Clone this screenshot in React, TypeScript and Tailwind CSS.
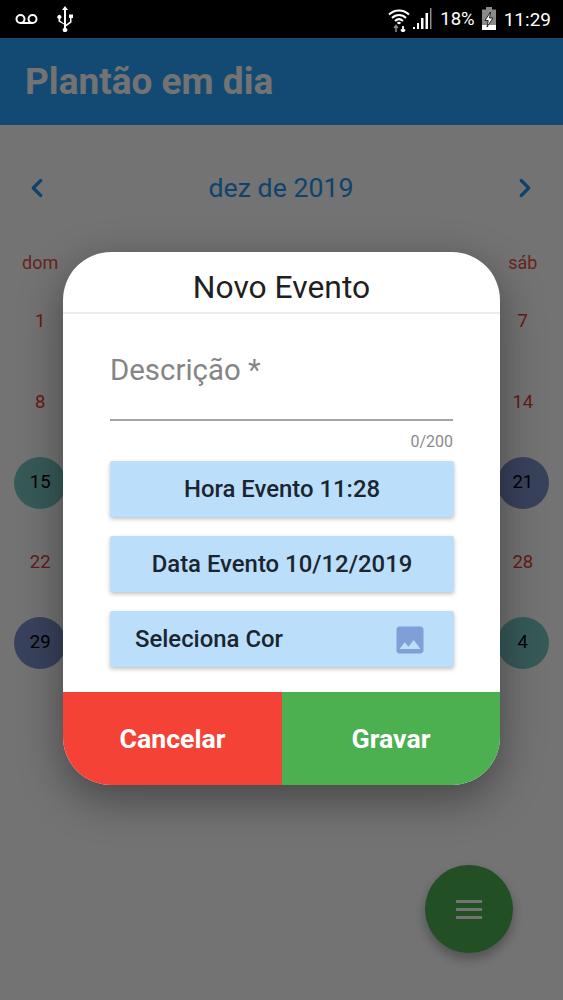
import { ChevronLeft, ChevronRight } from "lucide-react";

const weekdays = ["dom", "", "", "", "", "", "sáb"];
const days: { n: number | null; circle?: string }[] = Array.from({ length: 35 }, () => ({ n: null }));
const visible: [number, number, string?][] = [
  [0, 1],
  [6, 7],
  [7, 8],
  [13, 14],
  [14, 15, "bg-[#78c8c4]"],
  [20, 21, "bg-[#7c92cc]"],
  [21, 22],
  [27, 28],
  [28, 29, "bg-[#7c92cc]"],
  [34, 4, "bg-[#78c8c4]"],
];
visible.forEach(([i, n, circle]) => {
  days[i] = { n, circle };
});

function StatusBar() {
  return (
    <div className="relative z-20 flex h-[38px] items-center bg-black pl-[15px] pr-[12px] text-white">
      <svg width="23" height="12" viewBox="0 0 23 12" fill="none" stroke="white" strokeWidth="2">
        <circle cx="5.5" cy="6" r="4" />
        <circle cx="17.5" cy="6" r="4" />
        <path d="M5.5 10h12" />
      </svg>
      <svg className="ml-[17px]" width="20" height="26" viewBox="0 0 20 26" fill="white">
        <path d="M10 0l3 4h-2v14.5l4-3V12h-1V8.500h4V12h-1.500v4.500l-5.500 4v1.600a2.200 2.200 0 1 1-2 0v-3.600L3.500 15.500v-2.700a2 2 0 1 1 1.700 0v1.900L9 17.500V4H7z" />
      </svg>
      <div className="flex-1" />
      <svg width="22" height="26" viewBox="0 0 22 26" fill="none" stroke="white">
        <path d="M1 8.500C6.500 3 15.500 3 21 8.500" strokeWidth="2" />
        <path d="M4 12c4-4 10-4 14 0" strokeWidth="2" />
        <path d="M7 15c2.500-2.300 5.500-2.300 8 0" strokeWidth="2" />
        <path d="M9.500 17.500c1-.8 2-.8 3 0" strokeWidth="2" />
        <path d="M8 26v-6M6 22l2-2.500L10 22" stroke="#8c8c8c" strokeWidth="1.500" />
        <path d="M15 20v5M13 23.500l2 2.500 2-2.500" strokeWidth="1.800" />
      </svg>
      <svg className="ml-[3px]" width="20" height="24" viewBox="0 0 20 24" fill="white">
        <rect x="0" y="20" width="2" height="2" />
        <rect x="4" y="16" width="2" height="6" />
        <rect x="8" y="11" width="2.500" height="11" />
        <rect x="12.500" y="6" width="2.500" height="16" />
        <rect x="17" y="1" width="1.500" height="21" fill="#8c8c8c" />
      </svg>
      <span className="ml-[7px] text-[18.500px] leading-none">18%</span>
      <svg className="ml-[6px]" width="16" height="24" viewBox="0 0 16 24">
        <rect x="5" y="0" width="6" height="3" fill="#8a8a8a" />
        <rect x="1" y="2.500" width="14" height="20.500" fill="#8a8a8a" />
        <rect x="1" y="18" width="14" height="5" fill="white" />
        <path d="M9.500 5L4 13.500h3.300L6 20l6-9H8.500z" fill="white" stroke="black" strokeWidth="0.800" />
      </svg>
      <span className="ml-[7px] text-[19px] leading-none">11:29</span>
    </div>
  );
}

function Calendar() {
  return (
    <div className="flex flex-1 flex-col bg-white">
      <div className="flex h-[87px] items-center bg-[#2aa4ff] pl-[25px]">
        <span className="text-[37px] font-bold text-white">Plantão em dia</span>
      </div>
      <div className="mb-[32px] mt-[41px] flex h-[44px] items-center justify-between pl-[22px] pr-[23px] text-[#2196f3]">
        <ChevronLeft size={30} strokeWidth={2.6} />
        <span className="text-[26.700px]">dez de 2019</span>
        <ChevronRight size={30} strokeWidth={2.6} />
      </div>
      <div className="grid grid-cols-7">
        {weekdays.map((d, i) => (
          <div key={i} className="flex h-[40px] items-center justify-center pt-[1px] text-[18px] text-[#e8503f]">
            {d}
          </div>
        ))}
        {days.map((d, i) => (
          <div key={i} className="flex h-[80.250px] items-center justify-center">
            {d.n !== null && (
              <div
                className={`flex h-[52px] w-[52px] items-center justify-center rounded-full text-[18.500px] ${
                  d.circle ? `${d.circle} text-black` : "text-[#e53935]"
                }`}
              >
                {d.n}
              </div>
            )}
          </div>
        ))}
      </div>
    </div>
  );
}

function FormButton({ children, className = "justify-center" }: { children: React.ReactNode; className?: string }) {
  return (
    <div
      className={`flex h-[56px] items-center rounded-[2px] bg-[#bbdefb] pt-[2px] text-[23.900px] font-medium text-[#1a2530] shadow-[0_2px_4px_rgba(0,0,0,0.25)] ${className}`}
    >
      {children}
    </div>
  );
}

function Modal() {
  return (
    <div className="absolute inset-x-0 bottom-0 top-[38px] z-10 flex items-center justify-center bg-black/55 pb-[2px]">
      <div className="flex h-[533px] w-[437px] flex-col overflow-hidden rounded-[48px] bg-white shadow-[0_14px_44px_rgba(0,0,0,0.4)]">
        <div className="flex h-[62px] items-center justify-center border-b-2 border-[#ececec] pt-[12px] text-[31.800px] text-[#1f1f1f]">
          Novo Evento
        </div>
        <div className="flex flex-1 flex-col pl-[47px] pr-[46px]">
          <div className="mr-[1px] mt-[36px] h-[71px] border-b-2 border-[#a3a3a3] text-[29.400px] leading-[40px] text-[#858585]">
            Descrição *
          </div>
          <div className="mr-[1px] mt-[12px] h-[17px] text-right text-[16px] leading-[17px] text-[#8a8a8a]">0/200</div>
          <div className="mt-[11px] flex flex-col gap-[19px]">
            <FormButton>Hora Evento 11:28</FormButton>
            <FormButton>Data Evento 10/12/2019</FormButton>
            <FormButton className="justify-between pl-[25px] pr-[26px]">
              <span>Seleciona Cor</span>
              <svg width="36" height="36" viewBox="0 0 24 24" fill="#7f9fd6">
                <path d="M21 19V5c0-1.100-.9-2-2-2H5c-1.100 0-2 .9-2 2v14c0 1.100.9 2 2 2h14c1.100 0 2-.9 2-2zM8.500 13.500l2.500 3.010L14.500 12l4.500 6H5l3.500-4.500z" />
              </svg>
            </FormButton>
          </div>
        </div>
        <div className="flex h-[93px] text-[26.700px] font-bold text-white">
          <div className="flex w-[219px] items-center justify-center bg-[#f44336] pt-[2px]">Cancelar</div>
          <div className="flex flex-1 items-center justify-center bg-[#4caf50] pt-[2px]">Gravar</div>
        </div>
      </div>
    </div>
  );
}

export default function App() {
  return (
    <div className="relative flex h-[1000px] w-[563px] flex-col overflow-hidden bg-white font-['Roboto',sans-serif]">
      <StatusBar />
      <Calendar />
      <div className="absolute bottom-[47px] right-[50px] flex h-[88px] w-[88px] items-center justify-center rounded-full bg-[#4caf50] shadow-[0_6px_12px_rgba(0,0,0,0.3)]">
        <svg width="26" height="19" viewBox="0 0 26 19" fill="white">
          <rect y="0" width="26" height="3" />
          <rect y="8" width="26" height="3" />
          <rect y="16" width="26" height="3" />
        </svg>
      </div>
      <Modal />
    </div>
  );
}
